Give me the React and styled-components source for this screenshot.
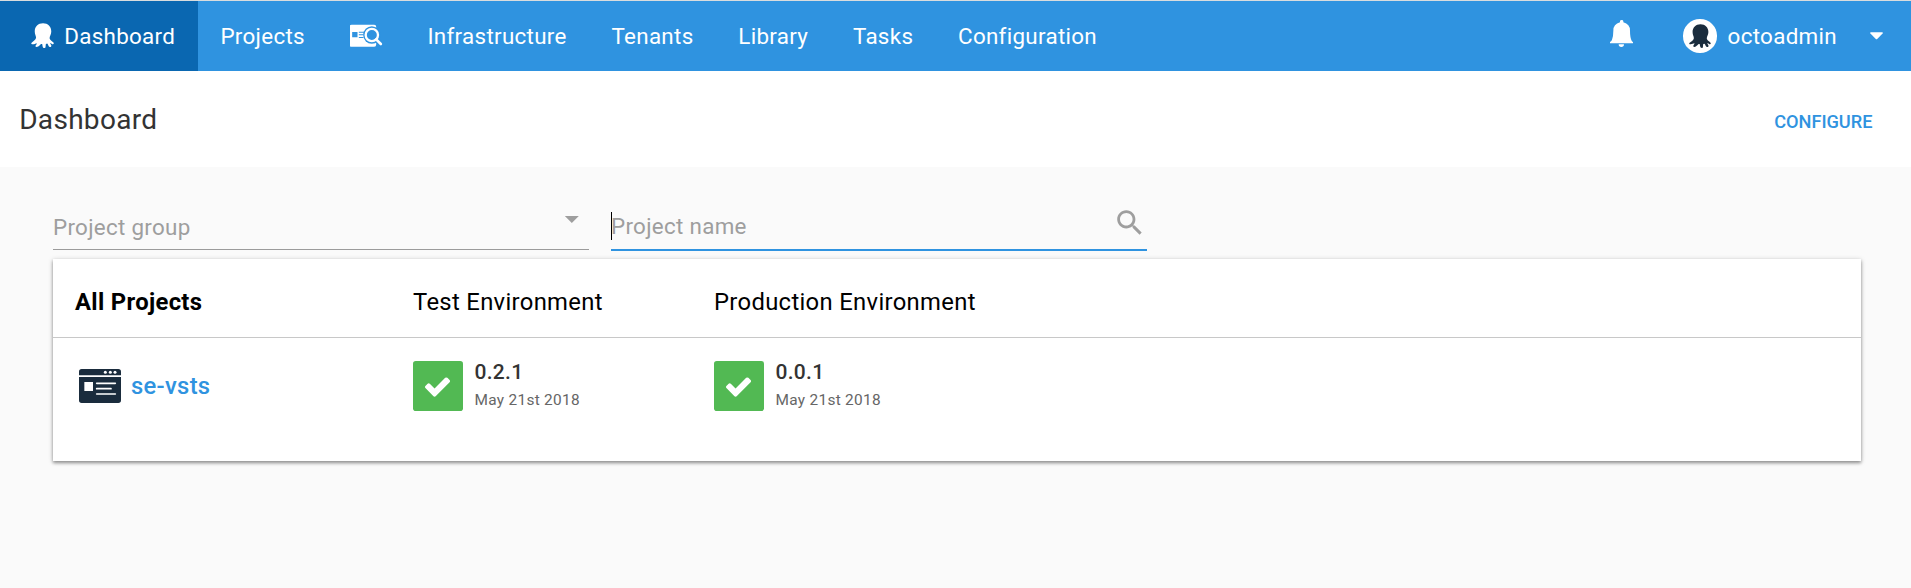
import React from "react";
import styled, { createGlobalStyle, css } from "styled-components";

const GlobalStyle = createGlobalStyle`
  *, *::before, *::after { box-sizing: border-box; }
  html, body { margin: 0; padding: 0; background: #fafafa; }
  body {
    font-family: Roboto, "Liberation Sans", sans-serif;
    font-size: 22.4px;
    letter-spacing: 0.3px;
    color: #333;
    overflow: hidden;
  }
`;

const Page = styled.div`
  min-height: 588px;
  border-top: 1px solid #d9dcde;
  background: #fafafa;
`;

const NavBar = styled.nav`
  display: flex;
  height: 70px;
  background: #2f93e0;
  color: #fff;
`;

const NavItem = styled.a`
  display: flex;
  align-items: center;
  height: 70px;
  padding: 0 22.4px;
  color: #fff;
  white-space: nowrap;
  line-height: 26px;
  ${(p) =>
    p.$active &&
    css`
      background: #0a67b1;
      padding-left: 31px;
      width: 198px;
    `}
`;

const NavLabel = styled.span`
  margin-left: ${(p) => (p.$gap ? "10.2px" : "0")};
`;

const NavActions = styled.div`
  display: flex;
  align-items: center;
  margin-left: auto;
  padding-right: 28px;
`;

const BellSlot = styled.span`
  display: flex;
  margin: 0 50px 5px 0;
`;

const Avatar = styled.span`
  display: flex;
  align-items: center;
  justify-content: center;
  width: 33.6px;
  height: 33.6px;
  border-radius: 50%;
  background: #fff;
  color: #1a2c3d;
`;

const UserName = styled.span`
  width: 110px;
  margin: 0 32.4px 0 10.6px;
  line-height: 26px;
`;

const TitleBar = styled.header`
  display: flex;
  justify-content: space-between;
  height: 96px;
  padding: 32px 38.6px 0 19.2px;
  background: #fff;
`;

const Title = styled.h1`
  margin: 0;
  font-size: 28px;
  font-weight: 400;
  line-height: 34px;
`;

const ConfigureLink = styled.a`
  padding-top: 8px;
  color: #2f93e0;
  font-size: 18.2px;
  font-weight: 500;
  line-height: 22px;
  letter-spacing: -0.03px;
`;

const Content = styled.main`
  padding: 34px 50px 0 53px;
`;

const Filters = styled.div`
  display: flex;
  gap: 22px;
  height: 58px;
`;

const Field = styled.div`
  display: flex;
  justify-content: space-between;
  align-items: flex-start;
  width: 536px;
  height: ${(p) => (p.$focused ? "50px" : "49px")};
  border-bottom: ${(p) => (p.$focused ? "2px solid #2f93e0" : "1px solid #9b9b9b")};
  color: #9e9e9e;
`;

const FieldText = styled.span`
  margin-top: ${(p) => (p.$focused ? "11px" : "12px")};
  line-height: 28px;
  ${(p) =>
    p.$focused &&
    css`
      background: linear-gradient(#000, #000) left / 1px 100% no-repeat;
    `}
`;

const Card = styled.section`
  width: 1808px;
  height: 202px;
  background: #fff;
  box-shadow: 0 1px 5px rgba(0, 0, 0, 0.22), 0 2px 3px rgba(0, 0, 0, 0.32);
`;

const Row = styled.div`
  display: grid;
  grid-template-columns: 338px 301px 301px;
  padding-left: 22px;
`;

const HeadRow = styled(Row)`
  height: 79px;
  border-bottom: 1px solid #c8c8c8;
  padding-top: 28px;
  color: #000;
  font-size: 23.8px;
  line-height: 30px;
  letter-spacing: 0.33px;
`;

const HeadCell = styled.span`
  font-weight: ${(p) => (p.$strong ? 700 : 400)};
`;

const BodyRow = styled(Row)`
  padding-top: 23px;
`;

const Project = styled.a`
  display: flex;
  align-items: center;
  height: 50px;
  gap: 10px;
  padding-left: 4px;
  color: #2f93e0;
  font-size: 23.8px;
  font-weight: 500;
  line-height: 28px;
`;

const Release = styled.div`
  display: flex;
  gap: 11.5px;
`;

const Status = styled.span`
  display: flex;
  align-items: center;
  justify-content: center;
  width: 50px;
  height: 50px;
  padding-right: 1px;
  border-radius: 2.8px;
  background: #52b953;
`;

const ReleaseInfo = styled.div`
  display: flex;
  flex-direction: column;
`;

const Version = styled.span`
  color: #333;
  font-size: 21px;
  font-weight: 500;
  line-height: 22px;
`;

const DeployDate = styled.span`
  margin-top: 8px;
  color: #666;
  font-size: 15.4px;
  line-height: 18px;
`;

const Octopus = ({ width = 23 }) => (
  <svg width={width} height={width * 1.1} viewBox="0 0 68 75" fill="currentColor">
    <path d="M35.500 1C21 1 11 11 11 25C11 34 15 38 15 44C14 51 6 54 1 59C0 62 2 63 5 63C10 63 13 61 17 60C17 64 13 66 13 69C14 72 18 72 21 70C25 67 27 64 30 62L33 62C34 66 34 71 37 74C40 75 43 74 43 71L44 62L48 61C51 64 51 69 55 71C59 72 61 70 60 66C59 63 57 62 57 59C60 60 62 63 65 63C68 63 68 60 66 57C62 53 56 51 55 45C55 39 60 34 60 25C60 11 50 1 35.500 1Z" />
  </svg>
);

const LibrarySearchIcon = () => (
  <svg width="33" height="24" viewBox="1.500 0 99 72">
    <path d="M6 2h68q6 0 6 6v54q0 6-6 6H6q-6 0-6-6V8q0-6 6-6Z" fill="#fff" />
    <path d="M8 24h16v16H8ZM28 23h18v3H28ZM28 31h14v3H28ZM28 39h14v3H28Z" fill="#2f93e0" />
    <circle cx="67" cy="33" r="26" fill="#2f93e0" />
    <path d="M80 46 98 64" stroke="#2f93e0" strokeWidth="14" />
    <circle cx="67" cy="33" r="18.5" fill="none" stroke="#fff" strokeWidth="7" />
    <path d="m80 46 14 14" stroke="#fff" strokeWidth="8" strokeLinecap="round" />
  </svg>
);

const Bell = () => (
  <svg width="23" height="27" viewBox="0 0 69 81" fill="#fff">
    <path d="M30 7V4q0-4 5-4t5 4v3q20 5 20 25 0 20 5 30 1 2 4 4v4H0v-4q5-3 6-7 4-9 4-27Q10 12 30 7ZM26 73h16q0 8-8 8t-8-8Z" />
  </svg>
);

const Caret = () => (
  <svg width="13" height="8" viewBox="0 0 13 8" fill="#fff">
    <path d="M.8.2h11.4q1 .3.4 1.2L7.2 7q-.7.6-1.4 0L.4 1.4Q-.2.5.8.2Z" />
  </svg>
);

const DropdownSvg = styled.svg`
  margin: 1px 0 0;
  fill: #9e9e9e;
`;

const SearchSvg = styled.svg`
  margin: 5px 0 0;
  fill: #9e9e9e;
`;

const ProjectIcon = () => (
  <svg width="42" height="34" viewBox="0 0 126 102">
    <path d="M8 0h110q8 0 8 8v11H0V8q0-8 8-8ZM0 24h126v70q0 8-8 8H8q-8 0-8-8Z" fill="#1a2c3d" />
    <g fill="#fff">
      <circle cx="79" cy="10" r="4.500" />
      <circle cx="94" cy="10" r="4.500" />
      <circle cx="108" cy="10" r="4.500" />
      <path d="M16 39h26v27H16Z" />
    </g>
    <path d="M53 43h56M53 59h43M53 75h56" stroke="#fff" strokeWidth="5" strokeLinecap="round" />
  </svg>
);

const CheckIcon = () => (
  <svg width="29" height="29" viewBox="0 0 1792 1792" fill="#fff">
    <path d="M1671 566q0 40-28 68l-724 724-136 136q-28 28-68 28t-68-28l-136-136-362-362q-28-28-28-68t28-68l136-136q28-28 68-28t68 28l294 295 656-657q28-28 68-28t68 28l136 136q28 28 28 68z" />
  </svg>
);

const sections = ["Infrastructure", "Tenants", "Library", "Tasks", "Configuration"];

function ReleaseCell({ version, date }) {
  return (
    <Release>
      <Status><CheckIcon /></Status>
      <ReleaseInfo>
        <Version>{version}</Version>
        <DeployDate>{date}</DeployDate>
      </ReleaseInfo>
    </Release>
  );
}

export default function App() {
  return (
    <>
      <GlobalStyle />
      <Page>
        <NavBar>
          <NavItem $active>
            <Octopus />
            <NavLabel $gap>Dashboard</NavLabel>
          </NavItem>
          <NavItem>Projects</NavItem>
          <NavItem><LibrarySearchIcon /></NavItem>
          {sections.map((name) => (
            <NavItem key={name}>{name}</NavItem>
          ))}
          <NavActions>
            <BellSlot><Bell /></BellSlot>
            <Avatar><Octopus width={22} /></Avatar>
            <UserName>octoadmin</UserName>
            <Caret />
          </NavActions>
        </NavBar>
        <TitleBar>
          <Title>Dashboard</Title>
          <ConfigureLink>CONFIGURE</ConfigureLink>
        </TitleBar>
        <Content>
          <Filters>
            <Field>
              <FieldText>Project group</FieldText>
              <DropdownSvg width="33.6" height="33.6" viewBox="0 0 24 24">
                <path d="M7 10l5 5 5-5z" />
              </DropdownSvg>
            </Field>
            <Field $focused>
              <FieldText $focused>Project name</FieldText>
              <SearchSvg width="33.6" height="33.6" viewBox="0 0 24 24">
                <path d="M15.5 14h-.79l-.28-.27C15.41 12.59 16 11.11 16 9.5 16 5.91 13.09 3 9.5 3S3 5.91 3 9.5 5.91 16 9.5 16c1.61 0 3.09-.59 4.23-1.57l.27.28v.79l5 4.99L20.49 19l-4.99-5zm-6 0C7.01 14 5 11.99 5 9.5S7.01 5 9.5 5 14 7.01 14 9.5 11.99 14 9.5 14z" />
              </SearchSvg>
            </Field>
          </Filters>
          <Card>
            <HeadRow>
              <HeadCell $strong>All Projects</HeadCell>
              <HeadCell>Test Environment</HeadCell>
              <HeadCell>Production Environment</HeadCell>
            </HeadRow>
            <BodyRow>
              <Project><ProjectIcon />se-vsts</Project>
              <ReleaseCell version="0.2.1" date="May 21st 2018" />
              <ReleaseCell version="0.0.1" date="May 21st 2018" />
            </BodyRow>
          </Card>
        </Content>
      </Page>
    </>
  );
}
